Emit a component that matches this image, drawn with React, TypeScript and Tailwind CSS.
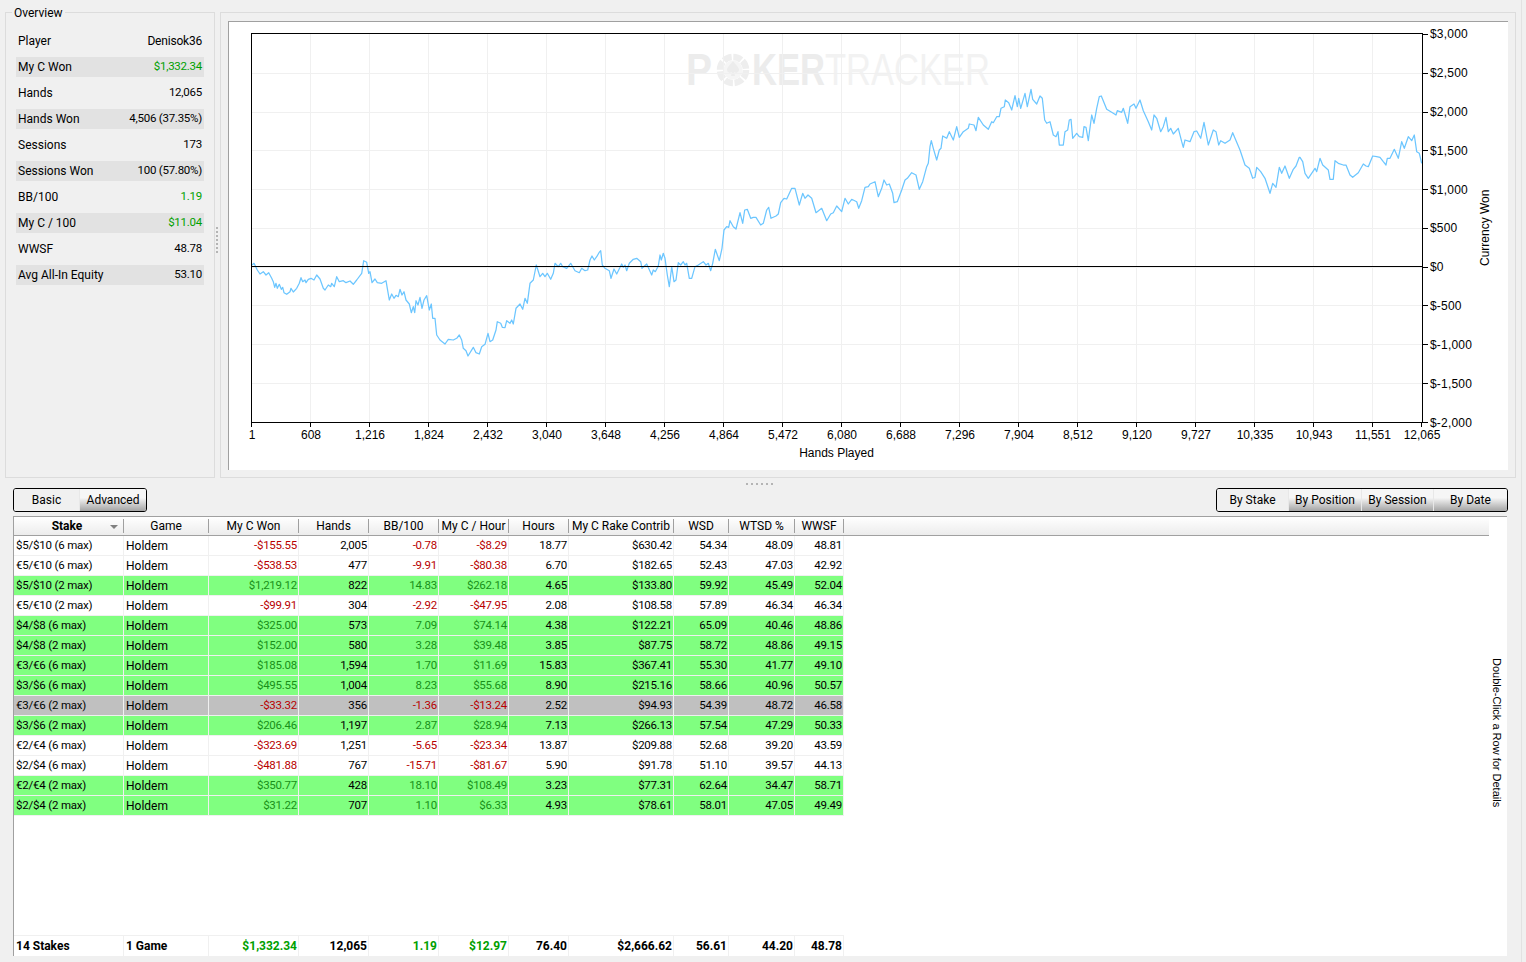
import { Fragment } from "react";

type Row = {
  stake: string;
  won: string;
  hands: string;
  bb: string;
  hour: string;
  hours: string;
  rake: string;
  wsd: string;
  wtsd: string;
  wwsf: string;
  tone: "green" | "gray" | "white";
};

const overview = [
  ["Player", "Denisok36", ""],
  ["My C Won", "$1,332.34", "g"],
  ["Hands", "12,065", ""],
  ["Hands Won", "4,506 (37.35%)", ""],
  ["Sessions", "173", ""],
  ["Sessions Won", "100 (57.80%)", ""],
  ["BB/100", "1.19", "g"],
  ["My C / 100", "$11.04", "g"],
  ["WWSF", "48.78", ""],
  ["Avg All-In Equity", "53.10", ""],
];

const rows: Row[] = [
  { stake: "$5/$10 (6 max)", won: "-$155.55", hands: "2,005", bb: "-0.78", hour: "-$8.29", hours: "18.77", rake: "$630.42", wsd: "54.34", wtsd: "48.09", wwsf: "48.81", tone: "white" },
  { stake: "€5/€10 (6 max)", won: "-$538.53", hands: "477", bb: "-9.91", hour: "-$80.38", hours: "6.70", rake: "$182.65", wsd: "52.43", wtsd: "47.03", wwsf: "42.92", tone: "white" },
  { stake: "$5/$10 (2 max)", won: "$1,219.12", hands: "822", bb: "14.83", hour: "$262.18", hours: "4.65", rake: "$133.80", wsd: "59.92", wtsd: "45.49", wwsf: "52.04", tone: "green" },
  { stake: "€5/€10 (2 max)", won: "-$99.91", hands: "304", bb: "-2.92", hour: "-$47.95", hours: "2.08", rake: "$108.58", wsd: "57.89", wtsd: "46.34", wwsf: "46.34", tone: "white" },
  { stake: "$4/$8 (6 max)", won: "$325.00", hands: "573", bb: "7.09", hour: "$74.14", hours: "4.38", rake: "$122.21", wsd: "65.09", wtsd: "40.46", wwsf: "48.86", tone: "green" },
  { stake: "$4/$8 (2 max)", won: "$152.00", hands: "580", bb: "3.28", hour: "$39.48", hours: "3.85", rake: "$87.75", wsd: "58.72", wtsd: "48.86", wwsf: "49.15", tone: "green" },
  { stake: "€3/€6 (6 max)", won: "$185.08", hands: "1,594", bb: "1.70", hour: "$11.69", hours: "15.83", rake: "$367.41", wsd: "55.30", wtsd: "41.77", wwsf: "49.10", tone: "green" },
  { stake: "$3/$6 (6 max)", won: "$495.55", hands: "1,004", bb: "8.23", hour: "$55.68", hours: "8.90", rake: "$215.16", wsd: "58.66", wtsd: "40.96", wwsf: "50.57", tone: "green" },
  { stake: "€3/€6 (2 max)", won: "-$33.32", hands: "356", bb: "-1.36", hour: "-$13.24", hours: "2.52", rake: "$94.93", wsd: "54.39", wtsd: "48.72", wwsf: "46.58", tone: "gray" },
  { stake: "$3/$6 (2 max)", won: "$206.46", hands: "1,197", bb: "2.87", hour: "$28.94", hours: "7.13", rake: "$266.13", wsd: "57.54", wtsd: "47.29", wwsf: "50.33", tone: "green" },
  { stake: "€2/€4 (6 max)", won: "-$323.69", hands: "1,251", bb: "-5.65", hour: "-$23.34", hours: "13.87", rake: "$209.88", wsd: "52.68", wtsd: "39.20", wwsf: "43.59", tone: "white" },
  { stake: "$2/$4 (6 max)", won: "-$481.88", hands: "767", bb: "-15.71", hour: "-$81.67", hours: "5.90", rake: "$91.78", wsd: "51.10", wtsd: "39.57", wwsf: "44.13", tone: "white" },
  { stake: "€2/€4 (2 max)", won: "$350.77", hands: "428", bb: "18.10", hour: "$108.49", hours: "3.23", rake: "$77.31", wsd: "62.64", wtsd: "34.47", wwsf: "58.71", tone: "green" },
  { stake: "$2/$4 (2 max)", won: "$31.22", hands: "707", bb: "1.10", hour: "$6.33", hours: "4.93", rake: "$78.61", wsd: "58.01", wtsd: "47.05", wwsf: "49.49", tone: "green" },
];

const columns = [
  { label: "Stake", cls: "w-[110px]" },
  { label: "Game", cls: "w-[85px]" },
  { label: "My C Won", cls: "w-[90px]" },
  { label: "Hands", cls: "w-[70px]" },
  { label: "BB/100", cls: "w-[70px]" },
  { label: "My C / Hour", cls: "w-[70px]" },
  { label: "Hours", cls: "w-[60px]" },
  { label: "My C Rake Contrib", cls: "w-[105px]" },
  { label: "WSD", cls: "w-[55px]" },
  { label: "WTSD %", cls: "w-[66px]" },
  { label: "WWSF", cls: "w-[49px]" },
];

const xTicks: [number, string][] = [
  [252, "1"], [311, "608"], [370, "1,216"], [429, "1,824"], [488, "2,432"], [547, "3,040"], [606, "3,648"],
  [665, "4,256"], [724, "4,864"], [783, "5,472"], [842, "6,080"], [901, "6,688"], [960, "7,296"], [1019, "7,904"],
  [1078, "8,512"], [1137, "9,120"], [1196, "9,727"], [1255, "10,335"], [1314, "10,943"], [1373, "11,551"], [1422, "12,065"],
];

const yTicks: [number, string][] = [
  [34, "$3,000"], [73, "$2,500"], [112, "$2,000"], [150.5, "$1,500"], [189.5, "$1,000"], [228, "$500"],
  [267, "$0"], [305.5, "$-500"], [344.5, "$-1,000"], [383.5, "$-1,500"], [422.5, "$-2,000"],
];

// traced from the graph, [offsetX, offsetY, then x,y pairs at 3x]
const traces: [number, number, number[]][] = [
  [240, 230, [36,105,42,100,52,120,60,132,70,125,78,135,86,128,95,145,100,155,104,172,108,160,112,175,118,163,124,178,128,172,132,188,140,193,150,185,153,175,160,186,170,175,178,160,183,143,188,155,195,150,198,158,205,148,213,145,222,150,230,135,240,147,250,175,255,180,265,165,272,170,275,160,283,170,290,140,298,155,310,152,318,158,330,153,340,163,350,150,365,130,371,92,380,97,386,130,390,125,396,158,405,147,412,158,425,160,438,152,442,175,448,210,455,192,462,205,468,196,475,200,480,178,486,195,492,185,498,210,508,222,514,248,520,230,524,248,528,212,534,225,540,202,546,235,552,210,560,197,568,240,574,222,578,265,585,265,590,315,600,330,615,342,625,328,640,330,650,325,658,315,665,330,670,355,678,362,684,378,700,352,708,368,718,372,725,350,735,343,744,310,750,335,758,330,768,300,772,275,782,280,787,292,795,293,800,272,810,280,815,270,820,282,828,235,840,222,848,238,855,205,862,220,870,160,880,150,889,105,900,140,908,130,915,140,922,130,932,148,940,130,945,100,955,110,962,100,968,110,980,115,992,100,1005,122,1018,128]],
  [570, 130, [28,428,35,415,45,422,53,420,60,390,66,378,73,390,80,380,87,368,92,362,97,405,105,415,118,422,123,445,132,417,140,432,155,402,160,412,165,405,170,422,178,400,190,388,200,385,212,395,216,415,230,402,245,435,250,420,256,425,265,408,270,375,274,390,280,370,285,385,292,435,298,470,305,410,312,455,318,450,325,398,332,405,340,395,345,405,350,400,358,445,365,445,375,410,385,405,400,395,408,405,415,400,422,422,428,400,436,358,448,392,456,355,462,300,470,290,476,292,480,272,490,290,498,297,510,248,518,280,524,240,532,238,542,265,550,262,558,262,572,285,580,280,590,240,596,232,603,265,618,258,625,252,632,218,642,205,650,207,665,175,675,175,688,225,698,190,705,205,714,195,725,205,738,248,755,235,770,272,782,252,790,248,800,228,815,245,825,205,835,222,845,208,860,215,866,235,875,212,885,172,895,170,900,162,915,155,925,200,935,175,942,150,950,165,958,162,968,190,972,218,982,215,995,180,1005,150,1012,145,1025,128,1038,135,1048,178,1058,155,1070,110,1075,100,1080,50]],
  [900, 80, [94,182,100,205,110,240,118,210,123,205,128,168,140,175,148,155,160,180,170,140,178,172,190,155,205,145,208,132,222,135,228,152,235,112,250,135,265,148,275,125,280,128,290,110,298,110,303,85,313,80,316,60,326,68,335,90,345,47,352,80,356,55,362,85,375,40,382,80,393,28,398,58,410,72,420,48,427,55,434,120,440,130,450,125,460,165,468,170,474,155,478,195,490,195,495,155,503,150,508,120,513,118,518,175,530,160,538,170,548,172,552,140,558,142,565,182,575,105,582,130,590,85,598,50,604,48,620,88,640,100,648,105,652,92,665,97,670,85,683,130,690,80,702,72,708,85,720,60,730,92,745,125,755,150,762,105,770,115,782,155,790,140,798,112,805,155,812,145,820,162,835,145,845,185,850,202,855,180,870,185,882,155,890,153,902,175,912,127,925,195,940,150,948,155,956,195,962,182,975,190,990,180,998,158,1005,175,1020,210,1035,255,1048,265,1058,295,1065,292,1070,262,1082,275,1095,295,1110,340,1118,310,1128,322,1138,262,1145,280,1155,258,1168,295,1180,268,1188,258,1198,232]],
  [1300, 20, [0,412,8,425,15,460,25,475,45,445,50,455,60,415,68,435,85,450,90,478,100,478,105,422,115,430,130,435,138,435,150,465,158,472,175,458,190,432,198,438,205,440,218,408,230,410,240,412,250,425,258,435,262,415,270,415,283,388,295,415,305,365,313,385,325,350,335,362,343,345,350,395,358,400,365,430]],
];

const linePoints = traces
  .flatMap(([ox, oy, pts]) =>
    pts
      .filter((_, i) => i % 2 === 0)
      .map((x, i) => `${(ox + x / 3).toFixed(1)},${(oy + pts[i * 2 + 1] / 3).toFixed(1)}`),
  )
  .join(" ");

const digits = "text-[11.5px] tracking-[-0.25px]";

function Watermark() {
  return (
    <g fill="#ececec" fontFamily="'Liberation Sans', sans-serif" fontSize="45">
      <text x="686" y="85" fontWeight="700" textLength="26" lengthAdjust="spacingAndGlyphs">P</text>
      <circle cx="733" cy="70" r="13" fill="none" stroke="#eeeeee" strokeWidth="6.5" strokeDasharray="8.5 1.7" />
      <circle cx="733" cy="70" r="9.5" fill="#f5f5f5" />
      <path d="M733 61c3 4 6 6 6 9a3 3 0 0 1-5 2l1 4h-4l1-4a3 3 0 0 1-5-2c0-3 3-5 6-9z" fill="#ececec" />
      <text x="752" y="85" textLength="238" lengthAdjust="spacingAndGlyphs">
        <tspan fontWeight="700">KER</tspan>
        <tspan fill="#f2f2f2">TRACKER</tspan>
      </text>
    </g>
  );
}

function Chart() {
  return (
    <svg width={1279} height={448} viewBox="229 22 1279 448" className="block">
      <Watermark />
      {xTicks.slice(1, -1).map(([x]) => (
        <line key={x} x1={x - 0.5} x2={x - 0.5} y1={34} y2={422} stroke="#f0f0f0" />
      ))}
      {yTicks.slice(1, -1).map(([y]) => (
        <line key={y} x1={252} x2={1422} y1={Math.floor(y) + 0.5} y2={Math.floor(y) + 0.5} stroke="#f0f0f0" />
      ))}
      <polyline points={linePoints} fill="none" stroke="#6cc6ff" strokeWidth={1.25} strokeLinejoin="round" />
      <line x1={252} x2={1422} y1={266.5} y2={266.5} stroke="#000" />
      <rect x={251.5} y={33.5} width={1171} height={389} fill="none" stroke="#000" />
      <g fontFamily="'Liberation Sans', sans-serif" fontSize="12" fill="#000">
        {xTicks.map(([x, label]) => (
          <Fragment key={label}>
            <line x1={x - 0.5} x2={x - 0.5} y1={423} y2={427} stroke="#000" />
            <text x={x} y={439} textAnchor="middle">{label}</text>
          </Fragment>
        ))}
        {yTicks.map(([y, label]) => (
          <Fragment key={label}>
            <line x1={1423} x2={1428} y1={Math.floor(y) + 0.5} y2={Math.floor(y) + 0.5} stroke="#000" />
            <text x={1430} y={y + 4} letterSpacing="0.2">{label}</text>
          </Fragment>
        ))}
        <text x={836.5} y={457} textAnchor="middle">Hands Played</text>
        <text transform="translate(1489 266) rotate(-90)">Currency Won</text>
      </g>
    </svg>
  );
}

function Segment({ label, active, cls }: { label: string; active?: boolean; cls: string }) {
  return (
    <div
      className={`${cls} flex items-center justify-center border-r border-r-[#e8e8e8] last:border-r-0 ${
        active ? "bg-[#f0f0f0]" : "bg-linear-to-b from-[#f6f6f6] from-40% to-[#a4a4a4]"
      }`}
    >
      {label}
    </div>
  );
}

function valueColor(value: string, tone: Row["tone"]) {
  if (value.startsWith("-")) return "text-[#b80000]";
  return tone === "green" ? "text-[#189018]" : "text-[#00a000]";
}

function TableRow({ row }: { row: Row }) {
  const bg = row.tone === "green" ? "bg-[#80ff80]" : row.tone === "gray" ? "bg-[#c0c0c0]" : "bg-white";
  const cell = "h-full flex items-center border-r border-r-[#f0f0f0] whitespace-nowrap";
  const num = `${cell} ${digits} justify-end pr-[1px]`;
  return (
    <div className={`flex h-5 w-fit border-b border-b-[#f0f0f0] ${bg}`}>
      <div className={`${cell} w-[110px] pl-[2px] text-[11.5px] tracking-[-0.2px]`}>{row.stake}</div>
      <div className={`${cell} w-[85px] pl-[2px]`}>Holdem</div>
      <div className={`${num} w-[90px] ${valueColor(row.won, row.tone)}`}>{row.won}</div>
      <div className={`${num} w-[70px]`}>{row.hands}</div>
      <div className={`${num} w-[70px] ${valueColor(row.bb, row.tone)}`}>{row.bb}</div>
      <div className={`${num} w-[70px] ${valueColor(row.hour, row.tone)}`}>{row.hour}</div>
      <div className={`${num} w-[60px]`}>{row.hours}</div>
      <div className={`${num} w-[105px]`}>{row.rake}</div>
      <div className={`${num} w-[55px]`}>{row.wsd}</div>
      <div className={`${num} w-[66px]`}>{row.wtsd}</div>
      <div className={`${num} w-[49px]`}>{row.wwsf}</div>
    </div>
  );
}

function Totals() {
  const cell = "h-full flex items-center border-r border-r-[#f0f0f0] whitespace-nowrap pb-[1px]";
  const num = `${cell} justify-end pr-[1px]`;
  return (
    <div className="flex h-[21px] w-fit border-t border-t-[#f0f0f0] font-bold">
      <div className={`${cell} w-[110px] pl-[2px]`}>14 Stakes</div>
      <div className={`${cell} w-[85px] pl-[2px]`}>1 Game</div>
      <div className={`${num} w-[90px] text-[#00a000]`}>$1,332.34</div>
      <div className={`${num} w-[70px]`}>12,065</div>
      <div className={`${num} w-[70px] text-[#00a000]`}>1.19</div>
      <div className={`${num} w-[70px] text-[#00a000]`}>$12.97</div>
      <div className={`${num} w-[60px]`}>76.40</div>
      <div className={`${num} w-[105px]`}>$2,666.62</div>
      <div className={`${num} w-[55px]`}>56.61</div>
      <div className={`${num} w-[66px]`}>44.20</div>
      <div className={`${num} w-[49px]`}>48.78</div>
    </div>
  );
}

export default function App() {
  return (
    <div className="flex h-[962px] w-[1526px] overflow-hidden bg-[#f0f0f0] font-['Roboto',sans-serif] text-[12px] text-black">
      <div className="flex w-[1522px] flex-col border-r border-r-[#e2e2e2]">
        <div className="flex h-[478px] pl-[5px] pt-[12px]">
          <div className="relative h-full w-[210px] border border-[#dcdcdc] pl-[10px] pt-[18px]">
            <span className="absolute left-[6px] top-[-7px] bg-[#f0f0f0] px-[2px] leading-[14px]">Overview</span>
            <div className="flex w-[188px] flex-col gap-[6px]">
              {overview.map(([label, value, color], i) => (
                <div key={label} className={`flex h-5 items-center justify-between px-[2px] ${i % 2 === 1 ? "bg-[#e2e2e2]" : ""}`}>
                  <span>{label}</span>
                  <span className={`${i === 0 ? "tracking-[-0.2px]" : digits} ${color === "g" ? "text-[#00a000]" : ""}`}>{value}</span>
                </div>
              ))}
            </div>
          </div>
          <div className="flex w-[5px] flex-col items-center justify-center gap-[2px] pb-[10px] pr-[1px]">
            {[0, 1, 2, 3, 4, 5, 6].map((d) => (
              <span key={d} className="h-[2px] w-[2px] bg-[#b4b4b4]" />
            ))}
          </div>
          <div className="h-full w-[1296px] border border-[#dcdcdc] pl-[7px] pr-[7px] pt-[8px]">
            <div className="w-[1280px] border-l border-t border-[#a0a0a0] bg-white">
              <Chart />
            </div>
          </div>
        </div>

        <div className="flex h-[10px] items-center justify-center gap-[3px] pr-[2px] pt-[2px]">
          {[0, 1, 2, 3, 4, 5].map((d) => (
            <span key={d} className="h-[2px] w-[2px] bg-[#b4b4b4]" />
          ))}
        </div>

        <div className="flex w-[1508px] justify-between pl-[13px]">
          <div className="flex h-6 overflow-hidden rounded-[3px] border border-black">
            <Segment label="Basic" active cls="w-[66px]" />
            <Segment label="Advanced" cls="w-[66px]" />
          </div>
          <div className="flex h-6 overflow-hidden rounded-[3px] border border-black">
            <Segment label="By Stake" active cls="w-[72px]" />
            <Segment label="By Position" cls="w-[73px]" />
            <Segment label="By Session" cls="w-[72px]" />
            <Segment label="By Date" cls="w-[73px]" />
          </div>
        </div>

        <div className="ml-[13px] mt-[4px] flex h-[440px] w-[1494px] border-l border-t border-[#a0a0a0] bg-white">
          <div className="flex w-[1476px] flex-col">
            <div className="flex h-[19px] border-b border-b-[#a0a0a0] bg-linear-to-b from-white to-[#ececec]">
              {columns.map((col, i) => (
                <div
                  key={col.label}
                  className={`${col.cls} relative my-[2px] flex items-center justify-center whitespace-nowrap border-r border-r-[#a0a0a0] ${
                    i === 0 ? "pr-[3px] font-bold" : ""
                  }`}
                >
                  {col.label}
                  {i === 0 ? (
                    <span className="absolute right-[5px] top-[6px] h-0 w-0 border-x-[4px] border-t-[4px] border-x-transparent border-t-[#808080]" />
                  ) : null}
                </div>
              ))}
            </div>
            <div className="flex-1">
              {rows.map((row) => (
                <TableRow key={row.stake} row={row} />
              ))}
            </div>
            <Totals />
          </div>
          <div className="flex flex-1 items-center justify-center pb-[8px] pr-[2px]">
            <span className="font-['Liberation_Sans',sans-serif] text-[11px] [writing-mode:vertical-rl]">Double-Click a Row for Details</span>
          </div>
        </div>
      </div>
    </div>
  );
}
